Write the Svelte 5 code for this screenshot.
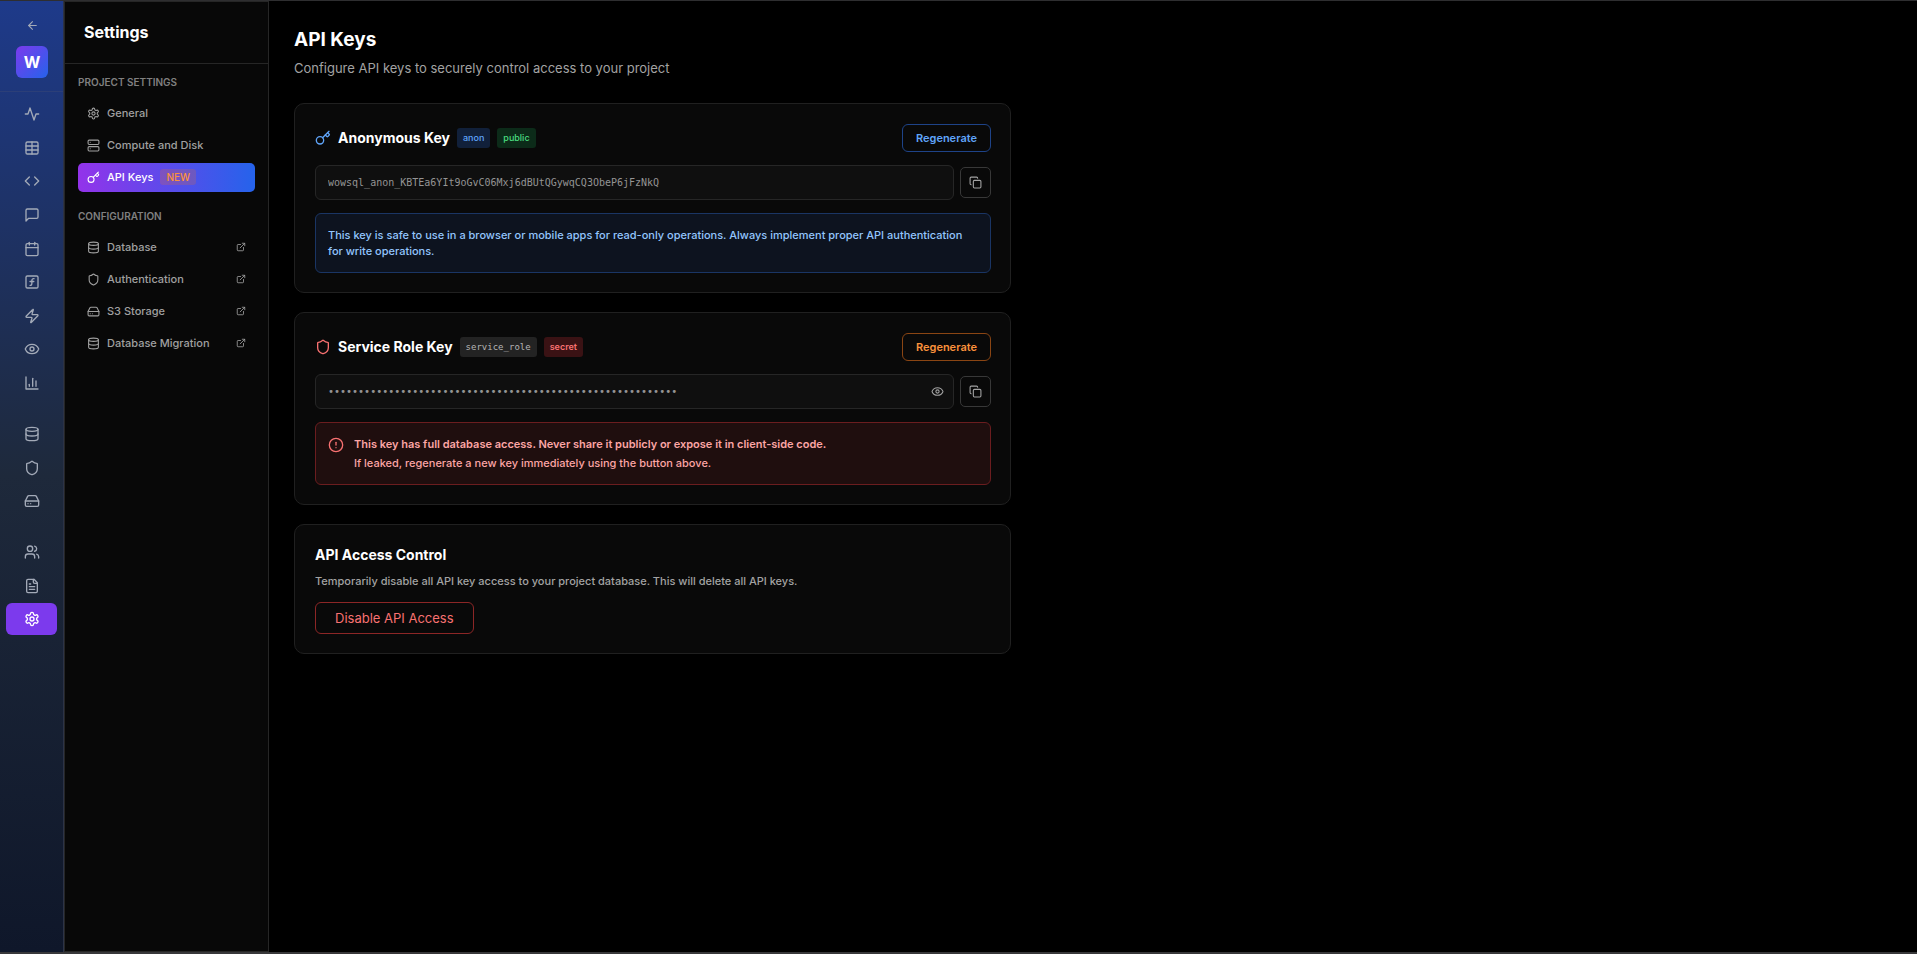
<script>
	const icons = {
		back: '<path d="m12 19-7-7 7-7"/><path d="M19 12H5"/>',
		activity: '<path d="M22 12h-4l-3 9L9 3l-3 9H2"/>',
		table: '<path d="M12 3v18"/><rect width="18" height="18" x="3" y="3" rx="2"/><path d="M3 9h18"/><path d="M3 15h18"/>',
		code: '<path d="m16 18 6-6-6-6"/><path d="m8 6-6 6 6 6"/>',
		message: '<path d="M21 15a2 2 0 0 1-2 2H7l-4 4V5a2 2 0 0 1 2-2h14a2 2 0 0 1 2 2z"/>',
		calendar: '<path d="M8 2v4"/><path d="M16 2v4"/><rect width="18" height="18" x="3" y="4" rx="2"/><path d="M3 10h18"/>',
		func: '<rect width="18" height="18" x="3" y="3" rx="2"/><path d="M9 17c2 0 2.8-1 2.8-2.8V10c0-2 1-3.3 3.2-3"/><path d="M9 11.2h5.7"/>',
		zap: '<path d="M4 14a1 1 0 0 1-.78-1.63l9.9-10.2a.5.5 0 0 1 .86.46l-1.92 6.02A1 1 0 0 0 13 10h7a1 1 0 0 1 .78 1.63l-9.9 10.2a.5.5 0 0 1-.86-.46l1.92-6.02A1 1 0 0 0 11 14z"/>',
		eye: '<path d="M2.06 12.35a1 1 0 0 1 0-.7 10.75 10.75 0 0 1 19.88 0 1 1 0 0 1 0 .7 10.75 10.75 0 0 1-19.88 0"/><circle cx="12" cy="12" r="3"/>',
		chart: '<path d="M3 3v18h18"/><path d="M18 17V9"/><path d="M13 17V5"/><path d="M8 17v-3"/>',
		database: '<ellipse cx="12" cy="5" rx="9" ry="3"/><path d="M3 5v14a9 3 0 0 0 18 0V5"/><path d="M3 12a9 3 0 0 0 18 0"/>',
		shield: '<path d="M20 13c0 5-3.5 7.5-7.66 8.95a1 1 0 0 1-.67-.01C7.5 20.5 4 18 4 13V6a1 1 0 0 1 1-1c2 0 4.5-1.2 6.24-2.72a1.17 1.17 0 0 1 1.52 0C14.51 3.81 17 5 19 5a1 1 0 0 1 1 1z"/>',
		drive: '<path d="M22 12H2"/><path d="M5.45 5.11 2 12v6a2 2 0 0 0 2 2h16a2 2 0 0 0 2-2v-6l-3.45-6.89A2 2 0 0 0 16.76 4H7.24a2 2 0 0 0-1.79 1.11z"/><path d="M6 16h.01"/><path d="M10 16h.01"/>',
		users: '<path d="M16 21v-2a4 4 0 0 0-4-4H6a4 4 0 0 0-4 4v2"/><circle cx="9" cy="7" r="4"/><path d="M22 21v-2a4 4 0 0 0-3-3.87"/><path d="M16 3.13a4 4 0 0 1 0 7.75"/>',
		file: '<path d="M15 2H6a2 2 0 0 0-2 2v16a2 2 0 0 0 2 2h12a2 2 0 0 0 2-2V7Z"/><path d="M14 2v4a2 2 0 0 0 2 2h4"/><path d="M10 9H8"/><path d="M16 13H8"/><path d="M16 17H8"/>',
		settings: '<path d="M12.22 2h-.44a2 2 0 0 0-2 2v.18a2 2 0 0 1-1 1.73l-.43.25a2 2 0 0 1-2 0l-.15-.08a2 2 0 0 0-2.73.73l-.22.38a2 2 0 0 0 .73 2.73l.15.1a2 2 0 0 1 1 1.72v.51a2 2 0 0 1-1 1.74l-.15.09a2 2 0 0 0-.73 2.73l.22.38a2 2 0 0 0 2.73.73l.15-.08a2 2 0 0 1 2 0l.43.25a2 2 0 0 1 1 1.73V20a2 2 0 0 0 2 2h.44a2 2 0 0 0 2-2v-.18a2 2 0 0 1 1-1.73l.43-.25a2 2 0 0 1 2 0l.15.08a2 2 0 0 0 2.73-.73l.22-.39a2 2 0 0 0-.73-2.73l-.15-.08a2 2 0 0 1-1-1.74v-.5a2 2 0 0 1 1-1.74l.15-.09a2 2 0 0 0 .73-2.73l-.22-.38a2 2 0 0 0-2.73-.73l-.15.08a2 2 0 0 1-2 0l-.43-.25a2 2 0 0 1-1-1.73V4a2 2 0 0 0-2-2z"/><circle cx="12" cy="12" r="3"/>',
		server: '<rect width="20" height="8" x="2" y="2" rx="2"/><rect width="20" height="8" x="2" y="14" rx="2"/><path d="M6 6h.01"/><path d="M6 18h.01"/>',
		key: '<path d="m15.5 7.5 2.3 2.3a1 1 0 0 0 1.4 0l2.1-2.1a1 1 0 0 0 0-1.4L19 4"/><path d="m21 2-9.6 9.6"/><circle cx="7.5" cy="15.5" r="5.5"/>',
		external: '<path d="M15 3h6v6"/><path d="M10 14 21 3"/><path d="M18 13v6a2 2 0 0 1-2 2H5a2 2 0 0 1-2-2V8a2 2 0 0 1 2-2h6"/>',
		copy: '<rect width="14" height="14" x="8" y="8" rx="2"/><path d="M4 16c-1.1 0-2-.9-2-2V4c0-1.1.9-2 2-2h10c1.1 0 2 .9 2 2"/>',
		alert: '<circle cx="12" cy="12" r="10"/><path d="M12 8v4"/><path d="M12 16h.01"/>'
	};

	const rail = [
		[
			['activity', 'Overview'],
			['table', 'Tables'],
			['code', 'SQL editor'],
			['message', 'Assistant'],
			['calendar', 'Schedules'],
			['func', 'Functions'],
			['zap', 'Realtime'],
			['eye', 'Logs'],
			['chart', 'Reports']
		],
		[
			['database', 'Database'],
			['shield', 'Authentication'],
			['drive', 'Storage']
		],
		[
			['users', 'Team'],
			['file', 'Docs'],
			['settings', 'Settings']
		]
	];

	const sections = [
		{
			title: 'PROJECT SETTINGS',
			items: [
				{ icon: 'settings', label: 'General' },
				{ icon: 'server', label: 'Compute and Disk' },
				{ icon: 'key', label: 'API Keys', badge: 'NEW', active: true }
			]
		},
		{
			title: 'CONFIGURATION',
			items: [
				{ icon: 'database', label: 'Database', external: true },
				{ icon: 'shield', label: 'Authentication', external: true },
				{ icon: 'drive', label: 'S3 Storage', external: true },
				{ icon: 'database', label: 'Database Migration', external: true }
			]
		}
	];

	const anonKey = 'wowsql_anon_KBTEa6YIt9oGvC06Mxj6dBUtQGywqCQ3ObeP6jFzNkQ';
	const serviceKey = 'wowsql_service_' + 'x'.repeat(43);

	let showService = $state(false);

	function copy(text) {
		navigator.clipboard?.writeText(text);
	}
</script>

{#snippet icon(name, size)}
	<svg
		width={size}
		height={size}
		viewBox="0 0 24 24"
		fill="none"
		stroke="currentColor"
		stroke-width="2"
		stroke-linecap="round"
		stroke-linejoin="round"
		aria-hidden="true">{@html icons[name]}</svg
	>
{/snippet}

<div class="app">
	<nav class="rail" aria-label="Project">
		<div class="rail-head">
			<a class="back" href="#projects" aria-label="Back">{@render icon('back', 13)}</a>
			<a class="logo" href="#home">W</a>
		</div>
		{#each rail as group, i}
			<div class="rail-group" class:tall={i === 0}>
				{#each group as [name, label]}
					<a href="#{name}" class:active={name === 'settings'} aria-label={label}>
						{@render icon(name, 16)}
					</a>
				{/each}
			</div>
		{/each}
	</nav>

	<aside class="panel">
		<h2>Settings</h2>
		{#each sections as section}
			<section>
				<h3>{section.title}</h3>
				<ul>
					{#each section.items as item}
						<li>
							<a href="#{item.label}" class:active={item.active}>
								{@render icon(item.icon, 13)}
								<span>{item.label}</span>
								{#if item.badge}<span class="new">{item.badge}</span>{/if}
								{#if item.external}
									<span class="external">{@render icon('external', 10)}</span>
								{/if}
							</a>
						</li>
					{/each}
				</ul>
			</section>
		{/each}
	</aside>

	<main>
		<h1>API Keys</h1>
		<p class="subtitle">Configure API keys to securely control access to your project</p>

		<div class="cards">
			<section class="card">
				<header>
					<span class="blue">{@render icon('key', 16)}</span>
					<h2>Anonymous Key</h2>
					<span class="tag anon">anon</span>
					<span class="tag public">public</span>
					<button class="regenerate">Regenerate</button>
				</header>
				<div class="key-row">
					<div class="field">
						<input type="text" readonly value={anonKey} aria-label="Anonymous key" />
					</div>
					<button class="copy" aria-label="Copy anonymous key" onclick={() => copy(anonKey)}>
						{@render icon('copy', 13)}
					</button>
				</div>
				<p class="info">
					This key is safe to use in a browser or mobile apps for read-only operations. Always
					implement proper API authentication for write operations.
				</p>
			</section>

			<section class="card">
				<header>
					<span class="red">{@render icon('shield', 16)}</span>
					<h2>Service Role Key</h2>
					<code class="tag role">service_role</code>
					<span class="tag secret">secret</span>
					<button class="regenerate orange">Regenerate</button>
				</header>
				<div class="key-row">
					<div class="field">
						<input
							type={showService ? 'text' : 'password'}
							readonly
							value={serviceKey}
							aria-label="Service role key"
						/>
						<button
							class="reveal"
							aria-label="Show service role key"
							onclick={() => (showService = !showService)}
						>
							{@render icon('eye', 13)}
						</button>
					</div>
					<button class="copy" aria-label="Copy service role key" onclick={() => copy(serviceKey)}>
						{@render icon('copy', 13)}
					</button>
				</div>
				<div class="warning">
					<span class="red">{@render icon('alert', 16)}</span>
					<div>
						<p><strong>This key has full database access. Never share it publicly or expose it in client-side code.</strong></p>
						<p>If leaked, regenerate a new key immediately using the button above.</p>
					</div>
				</div>
			</section>

			<section class="card access">
				<h2>API Access Control</h2>
				<p>Temporarily disable all API key access to your project database. This will delete all API keys.</p>
				<button class="disable">Disable API Access</button>
			</section>
		</div>
	</main>
</div>

<style>
	:global(body) {
		background: #000;
	}
	.app,
	.app :global(*) {
		box-sizing: border-box;
	}
	.app {
		display: flex;
		min-height: 100vh;
		border-top: 1px solid #2e2e30;
		border-bottom: 2px solid #38383a;
		background: #000;
		color: #fff;
		font-family: Inter, sans-serif;
		font-size: 11px;
		line-height: 16px;
	}
	h1,
	h2,
	h3,
	p,
	ul {
		margin: 0;
		padding: 0;
	}
	a {
		color: inherit;
		text-decoration: none;
	}
	svg {
		display: block;
		flex: none;
	}
	button {
		padding: 0;
		background: none;
		font: inherit;
		cursor: pointer;
	}

	.rail {
		display: flex;
		flex-direction: column;
		flex: none;
		gap: 19px;
		width: 64px;
		border-right: 1px solid #2c3347;
		background: linear-gradient(180deg, #1e3a8a 0%, #1e293b 50%, #0f172a 100%);
		color: #a3aab8;
	}
	.rail-head {
		display: flex;
		flex-direction: column;
		align-items: center;
		gap: 14px;
		height: 91px;
		margin-bottom: -13px;
		padding: 18px 0 0 1px;
		border-bottom: 1px solid #2c3f78;
	}
	.logo {
		display: flex;
		align-items: center;
		justify-content: center;
		width: 32px;
		height: 32px;
		border-radius: 6px;
		background: linear-gradient(135deg, #7c3aed, #2563eb);
		color: #fff;
		font-size: 16px;
		font-weight: 700;
	}
	.rail-group {
		display: flex;
		flex-direction: column;
		justify-content: space-between;
		height: 99px;
		padding: 0 6px;
	}
	.rail-group.tall {
		height: 301px;
	}
	.rail-group a {
		display: flex;
		align-items: center;
		justify-content: center;
		height: 32px;
		padding-left: 1px;
		border-radius: 6px;
	}
	.rail-group a.active {
		background: #7c3aed;
		color: #fff;
	}

	.panel {
		flex: none;
		width: 205px;
		border: 1px solid #262626;
		background: #080808;
	}
	.panel h2 {
		height: 62px;
		padding: 19px;
		border-bottom: 1px solid #262626;
		font-size: 16px;
		line-height: 22px;
	}
	.panel section {
		padding: 10px 13px 0;
	}
	.panel section + section {
		padding-top: 16px;
	}
	.panel h3 {
		margin-bottom: 9px;
		color: #808080;
		font-size: 10px;
		font-weight: 600;
		line-height: 16px;
	}
	.panel ul {
		display: flex;
		flex-direction: column;
		gap: 3px;
		list-style: none;
	}
	.panel li a {
		display: flex;
		align-items: center;
		gap: 7px;
		height: 29px;
		padding: 0 9px 1px;
		border-radius: 5px;
		color: #a0a0a0;
		font-weight: 500;
	}
	.panel li a.active {
		background: linear-gradient(90deg, #9333ea, #2563eb);
		color: #fff;
	}
	.new {
		padding: 0 6px;
		border-radius: 3px;
		background: rgba(249, 115, 22, 0.2);
		color: #fb923c;
		font-size: 10px;
	}
	.external {
		margin-left: auto;
	}

	main {
		flex: 1;
		min-width: 0;
		padding: 26px 25px;
	}
	h1 {
		font-size: 19px;
		font-weight: 700;
		line-height: 26px;
	}
	.subtitle {
		margin-top: 5px;
		color: #a3a3a3;
		font-size: 13px;
		line-height: 20px;
	}
	.cards {
		display: flex;
		flex-direction: column;
		gap: 19px;
		max-width: 717px;
		margin-top: 25px;
	}
	.card {
		padding: 20px 19px 19px 20px;
		border: 1px solid #202020;
		border-radius: 10px;
		background: #090909;
	}
	.card header {
		display: flex;
		align-items: center;
		gap: 7px;
	}
	.card h2 {
		font-size: 14px;
		font-weight: 700;
		line-height: 20px;
	}
	.tag {
		padding: 2px 6px;
		border-radius: 3px;
		font-size: 9px;
		font-weight: 500;
	}
	.blue {
		color: #60a5fa;
	}
	.red {
		color: #f87171;
	}
	.anon {
		background: #11203a;
		color: #60a5fa;
	}
	.public {
		background: #0c2b19;
		color: #4ade80;
	}
	.role {
		background: #232323;
		color: #b5b5b5;
		font-family: 'DejaVu Sans Mono', monospace;
		font-weight: 400;
	}
	.secret {
		background: #3a1214;
		color: #f87171;
		font-weight: 600;
	}
	.regenerate {
		height: 28px;
		margin-left: auto;
		padding: 0 13px;
		border: 1px solid #1e4388;
		border-radius: 6px;
		color: #60a5fa;
		font-weight: 600;
	}
	.regenerate.orange {
		border-color: #8a4513;
		color: #fb923c;
	}
	.key-row {
		display: flex;
		align-items: center;
		gap: 6px;
		margin: 13px 0;
	}
	.field {
		display: flex;
		align-items: center;
		flex: 1;
		height: 35px;
		padding: 0 9px 0 12px;
		border: 1px solid #262626;
		border-radius: 6px;
		background: #0f0f0f;
		color: #a3a3a3;
	}
	.field input {
		flex: 1;
		min-width: 0;
		height: 20px;
		padding: 0;
		border: 0;
		outline: 0;
		background: none;
		color: #949494;
		font-family: 'DejaVu Sans Mono', monospace;
		font-size: 10px;
		line-height: 20px;
	}
	.reveal {
		border: 0;
		color: inherit;
	}
	.copy {
		display: flex;
		align-items: center;
		justify-content: center;
		width: 31px;
		height: 31px;
		border: 1px solid #383838;
		border-radius: 5px;
		color: #a3a3a3;
	}
	.info {
		padding: 13px 12px;
		border: 1px solid #1a3564;
		border-radius: 6px;
		background: #0d131f;
		color: #93c5fd;
		font-weight: 500;
	}
	.warning {
		display: flex;
		gap: 10px;
		padding: 12px 12px 11px;
		border: 1px solid #6b1d1f;
		border-radius: 6px;
		background: #1f0e0e;
		color: #fca5a5;
	}
	.warning .red {
		padding-top: 2px;
	}
	.warning p {
		font-weight: 500;
		line-height: 19px;
	}
	.warning strong {
		font-weight: 600;
	}
	.access p {
		margin: 8px 0 13px;
		color: #a3a3a3;
		font-weight: 500;
	}
	.disable {
		height: 32px;
		padding: 0 19px;
		border: 1px solid #8c2626;
		border-radius: 6px;
		color: #f87171;
		font-size: 13px;
		font-weight: 400;
	}
</style>
